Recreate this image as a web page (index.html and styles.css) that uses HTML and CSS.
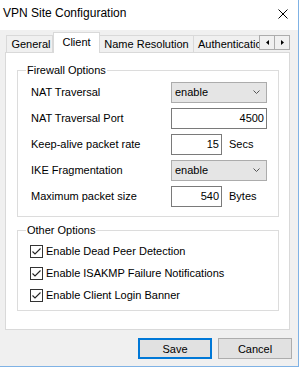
FILE: index.html
```html
<!DOCTYPE html>
<html>
<head>
<meta charset="utf-8">
<link rel="stylesheet" href="styles.css">
</head>
<body>
<div class="window">
  <div class="titlebar">
    <span class="title">VPN Site Configuration</span>
    <svg class="close" width="10" height="10" viewBox="0 0 10 10"><path d="M0.5 0.5L9.5 9.5M9.5 0.5L0.5 9.5" stroke="#000" stroke-width="1" fill="none"/></svg>
  </div>
  <div class="content">
    <div class="tabstrip">
      <div class="tabview">
        <div class="tab t-general">General</div>
        <div class="tab active t-client">Client</div>
        <div class="tab t-name">Name Resolution</div>
        <div class="tab t-auth">Authentication</div>
      </div>
      <div class="scroller">
        <span class="sbtn sbtn-left"><svg width="3" height="5" viewBox="0 0 3 5"><path d="M3 0L0 2.5L3 5Z" fill="#000"/></svg></span>
        <span class="sbtn sbtn-right"><svg width="3" height="5" viewBox="0 0 3 5"><path d="M0 0L3 2.5L0 5Z" fill="#000"/></svg></span>
      </div>
    </div>
    <div class="panel">
      <fieldset class="group">
        <legend>Firewall Options</legend>
        <div class="rows fw-rows">
          <div class="row"><span class="lbl">NAT Traversal</span><div class="select"><span>enable</span><svg width="7" height="4" viewBox="0 0 7 4"><path d="M0.5 0.5L3.5 3.5L6.5 0.5" stroke="#555" fill="none"/></svg></div></div>
          <div class="row"><span class="lbl">NAT Traversal Port</span><div class="edit wide">4500</div></div>
          <div class="row"><span class="lbl">Keep-alive packet rate</span><div class="edit narrow">15</div><span class="unit">Secs</span></div>
          <div class="row"><span class="lbl">IKE Fragmentation</span><div class="select"><span>enable</span><svg width="7" height="4" viewBox="0 0 7 4"><path d="M0.5 0.5L3.5 3.5L6.5 0.5" stroke="#555" fill="none"/></svg></div></div>
          <div class="row"><span class="lbl">Maximum packet size</span><div class="edit narrow">540</div><span class="unit">Bytes</span></div>
        </div>
      </fieldset>
      <fieldset class="group other">
        <legend>Other Options</legend>
        <div class="rows cb-rows">
          <div class="cbrow"><svg class="cb" width="13" height="13" viewBox="0 0 13 13"><rect x="0.5" y="0.5" width="12" height="12" fill="#fff" stroke="#333"/><path d="M2.5 6.5L5 9L10.5 3.5" stroke="#222" stroke-width="1.1" fill="none"/></svg><span>Enable Dead Peer Detection</span></div>
          <div class="cbrow"><svg class="cb" width="13" height="13" viewBox="0 0 13 13"><rect x="0.5" y="0.5" width="12" height="12" fill="#fff" stroke="#333"/><path d="M2.5 6.5L5 9L10.5 3.5" stroke="#222" stroke-width="1.1" fill="none"/></svg><span>Enable ISAKMP Failure Notifications</span></div>
          <div class="cbrow"><svg class="cb" width="13" height="13" viewBox="0 0 13 13"><rect x="0.5" y="0.5" width="12" height="12" fill="#fff" stroke="#333"/><path d="M2.5 6.5L5 9L10.5 3.5" stroke="#222" stroke-width="1.1" fill="none"/></svg><span>Enable Client Login Banner</span></div>
        </div>
      </fieldset>
    </div>
    <div class="buttons">
      <div class="btn default">Save</div>
      <div class="btn">Cancel</div>
    </div>
  </div>
</div>
</body>
</html>
```
FILE: styles.css
```css
html, body {
  margin: 0;
  padding: 0;
}
body {
  width: 299px;
  height: 367px;
  overflow: hidden;
  font-family: "Liberation Sans", Arial, sans-serif;
  font-size: 11px;
  color: #000;
}
.window {
  width: 299px;
  height: 367px;
  box-sizing: border-box;
  background: #f0f0f0;
  border-right: 1px solid #7fb2e5;
  border-bottom: 1px solid #7fb2e5;
  display: flex;
  flex-direction: column;
}
.titlebar {
  height: 30px;
  background: #fff;
  display: flex;
  align-items: flex-start;
  justify-content: space-between;
  padding: 6px 10px 0 3px;
  box-sizing: border-box;
}
.title {
  font-size: 12px;
  line-height: 14px;
}
.close {
  display: block;
  margin-top: 3px;
}
.content {
  padding: 0 8px 0 5px;
  display: flex;
  flex-direction: column;
}
.tabstrip {
  height: 23px;
  margin-bottom: -1px;
  display: flex;
  position: relative;
  z-index: 1;
}
.tabview {
  flex: 1;
  display: flex;
  align-items: flex-end;
  overflow: hidden;
  padding-left: 1px;
  min-width: 0;
}
.tab {
  flex: none;
  box-sizing: border-box;
  height: 17px;
  margin-bottom: 1px;
  background: #f0f0f0;
  border-top: 1px solid #d9d9d9;
  border-right: 1px solid #d9d9d9;
  display: flex;
  align-items: center;
  justify-content: center;
  white-space: nowrap;
  line-height: 13px;
}
.t-general {
  width: 47px;
  border-left: 1px solid #d9d9d9;
  padding-left: 3px;
}
.t-client {
  width: 47px;
}
.tab.active {
  height: 21px;
  margin-bottom: 0;
  background: #fff;
  border-left: 1px solid #d9d9d9;
  padding-bottom: 2px;
}
.t-name {
  width: 94px;
}
.t-auth {
  width: 90px;
  justify-content: flex-start;
  padding-left: 4px;
}
.scroller {
  align-self: flex-start;
  margin-top: 5px;
  display: flex;
  height: 15px;
}
.sbtn {
  box-sizing: border-box;
  height: 15px;
  background: #f0f0f0;
  border: 1px solid #acacac;
  display: flex;
  align-items: center;
  justify-content: center;
}
.sbtn svg {
  display: block;
}
.sbtn-left {
  width: 16px;
}
.sbtn-right {
  width: 15px;
  border-left: none;
}
.panel {
  height: 278px;
  box-sizing: border-box;
  background: #fff;
  border: 1px solid #d9d9d9;
  padding: 11px 10px 0 11px;
}
.group {
  margin: 0;
  padding: 0;
  border: 1px solid #dcdcdc;
  min-width: 0;
}
.group legend {
  margin-left: 8px;
  padding: 0 1px;
  line-height: 13px;
  font-size: 11px;
}
.other {
  margin-top: 7px;
}
.fw-rows {
  padding: 2px 11px 7px 13px;
}
.row {
  height: 26px;
  display: flex;
  align-items: center;
}
.lbl {
  width: 140px;
  flex: none;
}
.select {
  width: 96px;
  height: 21px;
  box-sizing: border-box;
  border: 1px solid #acacac;
  background: #e5e5e5;
  display: flex;
  align-items: center;
  justify-content: space-between;
  padding: 0 6px 0 3px;
}
.select svg {
  display: block;
}
.edit {
  height: 21px;
  box-sizing: border-box;
  border: 1px solid #7a7a7a;
  background: #fff;
  display: flex;
  align-items: center;
  justify-content: flex-end;
  padding-right: 2px;
}
.edit.wide {
  width: 96px;
}
.edit.narrow {
  width: 51px;
}
.unit {
  margin-left: 7px;
}
.cb-rows {
  padding: 3px 10px 4px 12px;
}
.cbrow {
  height: 22px;
  display: flex;
  align-items: center;
}
.cb {
  display: block;
  flex: none;
  margin-right: 3px;
}
.buttons {
  margin-top: 8px;
  margin-right: -2px;
  display: flex;
  justify-content: flex-end;
  gap: 6px;
}
.btn {
  width: 74px;
  height: 21px;
  box-sizing: border-box;
  background: #e1e1e1;
  border: 1px solid #adadad;
  display: flex;
  align-items: center;
  justify-content: center;
}
.btn.default {
  border: 2px solid #0078d7;
}
```
